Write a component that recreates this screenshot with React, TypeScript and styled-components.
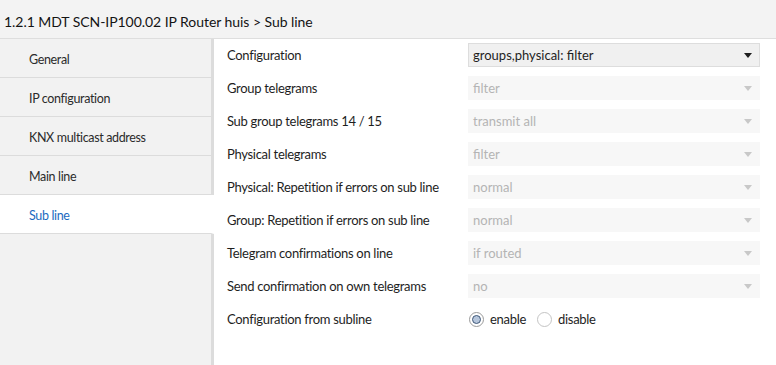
import { Fragment } from "react";
import styled, { createGlobalStyle } from "styled-components";

const GlobalStyle = createGlobalStyle`
  html, body {
    margin: 0;
    padding: 0;
    background: #fff;
  }
  body {
    font-family: Lato, "Liberation Sans", Arial, sans-serif;
    color: #1e1e1e;
  }
`;

const Page = styled.div`
  display: flex;
  flex-direction: column;
  width: 776px;
  height: 365px;
  overflow: hidden;
`;

const Header = styled.div`
  height: 39px;
  flex: none;
  box-sizing: border-box;
  display: flex;
  align-items: center;
  padding: 5px 0 0 4px;
  background: #f3f3f3;
  border-bottom: 1px solid #dedede;
  font-size: 14px;
  letter-spacing: -0.05px;
  color: #141414;
`;

const Body = styled.div`
  display: flex;
  flex: 1;
  min-height: 0;
`;

const Sidebar = styled.nav`
  width: 214px;
  flex: none;
  display: flex;
  flex-direction: column;
  background: #f2f2f2;
`;

const NavItem = styled.div<{ $active?: boolean }>`
  display: flex;
  align-items: center;
  padding: 3px 0 0 29px;
  box-sizing: border-box;
  height: 39px;
  font-size: 12.5px;
  letter-spacing: -0.35px;
  color: ${(p) => (p.$active ? "#1b6ac0" : "#2b2b2b")};
  background: ${(p) => (p.$active ? "#fff" : "#f2f2f2")};
  border-bottom: 1px solid #dcdcdc;
  border-right: 3px solid ${(p) => (p.$active ? "#fff" : "#dcdcdc")};
`;

const NavFill = styled.div`
  flex: 1;
  border-right: 3px solid #dcdcdc;
`;

const Main = styled.main`
  flex: 1;
  display: grid;
  grid-template-columns: 241px 292px;
  grid-auto-rows: 33px;
  align-content: start;
  padding: 4px 0 0 13px;
`;

const Label = styled.div`
  font-size: 13px;
  letter-spacing: -0.3px;
  line-height: 24px;
  color: #1e1e1e;
  white-space: nowrap;
`;

const Select = styled.div<{ $disabled?: boolean }>`
  height: 24px;
  box-sizing: border-box;
  display: flex;
  align-items: center;
  justify-content: space-between;
  padding: 0 7px 0 4px;
  font-size: 13px;
  background: ${(p) => (p.$disabled ? "#f7f7f7" : "#f0f0f0")};
  border: 1px solid ${(p) => (p.$disabled ? "#f7f7f7" : "#dddddd")};
  color: ${(p) => (p.$disabled ? "#b4b4b4" : "#1e1e1e")};
`;

const Caret = styled.span<{ $disabled?: boolean }>`
  width: 0;
  height: 0;
  border-left: 4px solid transparent;
  border-right: 4px solid transparent;
  border-top: 5px solid ${(p) => (p.$disabled ? "#c8c8c8" : "#1e1e1e")};
`;

const RadioGroup = styled.div`
  display: flex;
  align-items: center;
  height: 24px;
  font-size: 13px;
  letter-spacing: -0.3px;
  padding-left: 1px;
`;

const RadioOption = styled.label`
  display: flex;
  align-items: center;
  gap: 6px;
  margin-right: 11px;
`;

const RadioCircle = styled.span<{ $checked?: boolean }>`
  width: 15px;
  height: 15px;
  box-sizing: border-box;
  border-radius: 50%;
  border: 1px solid ${(p) => (p.$checked ? "#9a9a9a" : "#c4c4c4")};
  background: #fff;
  display: flex;
  align-items: center;
  justify-content: center;
  &::after {
    content: "";
    display: ${(p) => (p.$checked ? "block" : "none")};
    width: 9px;
    height: 9px;
    box-sizing: border-box;
    border-radius: 50%;
    background: #b6c6dc;
    border: 1px solid #3f5878;
  }
`;

const nav = ["General", "IP configuration", "KNX multicast address", "Main line", "Sub line"];

const rows: { label: string; value: string; disabled?: boolean }[] = [
  { label: "Configuration", value: "groups,physical: filter" },
  { label: "Group telegrams", value: "filter", disabled: true },
  { label: "Sub group telegrams 14 / 15", value: "transmit all", disabled: true },
  { label: "Physical telegrams", value: "filter", disabled: true },
  { label: "Physical: Repetition if errors on sub line", value: "normal", disabled: true },
  { label: "Group: Repetition if errors on sub line", value: "normal", disabled: true },
  { label: "Telegram confirmations on line", value: "if routed", disabled: true },
  { label: "Send confirmation on own telegrams", value: "no", disabled: true },
];

export default function App() {
  return (
    <Page>
      <GlobalStyle />
      <Header>1.2.1 MDT SCN-IP100.02 IP Router huis &gt; Sub line</Header>
      <Body>
        <Sidebar>
          {nav.map((n) => (
            <NavItem key={n} $active={n === "Sub line"}>
              {n}
            </NavItem>
          ))}
          <NavFill />
        </Sidebar>
        <Main>
          {rows.map((r) => (
            <Fragment key={r.label}>
              <Label>{r.label}</Label>
              <Select $disabled={r.disabled}>
                <span>{r.value}</span>
                <Caret $disabled={r.disabled} />
              </Select>
            </Fragment>
          ))}
          <Label>Configuration from subline</Label>
          <RadioGroup>
            <RadioOption>
              <RadioCircle $checked />
              enable
            </RadioOption>
            <RadioOption>
              <RadioCircle />
              disable
            </RadioOption>
          </RadioGroup>
        </Main>
      </Body>
    </Page>
  );
}
